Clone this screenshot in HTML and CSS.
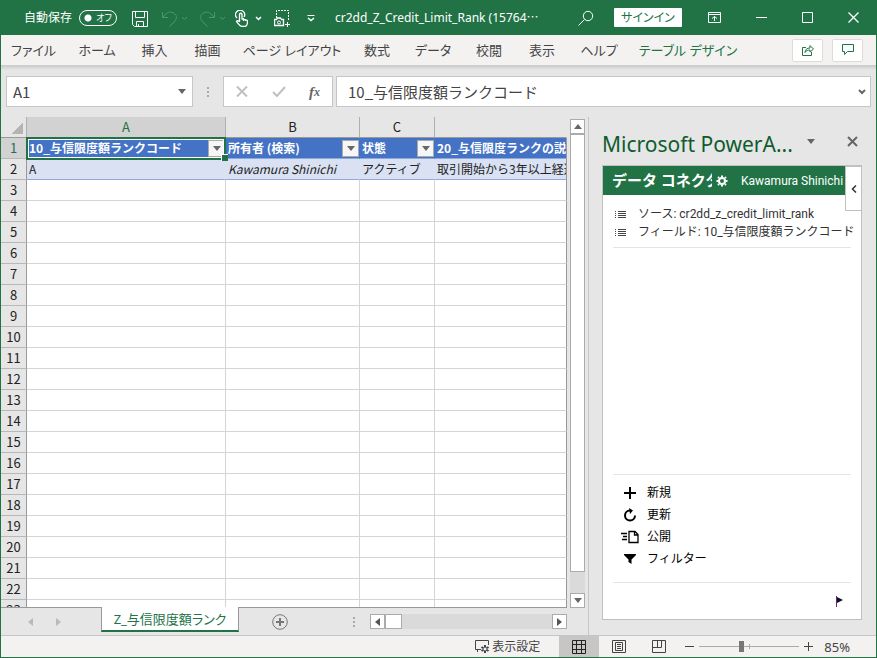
FILE: index.html
```
<!DOCTYPE html>
<html lang="ja">
<head>
    <meta charset="UTF-8">
    <meta name="viewport" content="width=device-width, initial-scale=1.0">
    <title>cr2dd_Z_Credit_Limit_Rank</title>
    <link rel="stylesheet" href="styles.css">
</head>
<body>
    <header class="titlebar">
        <label class="autosave" for="autosave">自動保存</label>
        <span class="toggle">
            <input type="checkbox" id="autosave">
            <span class="toggle-text">オフ</span>
        </span>
        <div class="quick">
            <button type="button" class="icon-btn save" aria-label="保存">
                <svg width="16" height="16" viewBox="0 0 16 16"><path d="M.5.5h15v15h-13l-2-2zM3.500.5v6h9v-6M4.500 15.500v-5h7v5M6.500 15v-2"/></svg>
            </button>
            <button type="button" class="icon-btn dim" aria-label="元に戻す">
                <svg width="15" height="16" viewBox="0 0 15 16"><path d="M.500 1v5.500h5.500M1 6l3-3c3-3 7-2 9 0s2 5-1 8l-4.500 4.500"/></svg>
            </button>
            <button type="button" class="icon-btn dim chev" aria-label="元に戻す履歴">
                <svg width="7" height="5" viewBox="0 0 7 5"><path d="M1 1l2.500 2.500L6 1"/></svg>
            </button>
            <button type="button" class="icon-btn dim redo" aria-label="やり直し">
                <svg width="15" height="16" viewBox="0 0 15 16"><path d="M14.500 1v5.500H9M14 6l-3-3C8 0 4 1 2 3s-2 5 1 8l4.500 4.500"/></svg>
            </button>
            <button type="button" class="icon-btn dim chev" aria-label="やり直し履歴">
                <svg width="7" height="5" viewBox="0 0 7 5"><path d="M1 1l2.500 2.500L6 1"/></svg>
            </button>
            <button type="button" class="icon-btn touch" aria-label="タッチ">
                <svg width="13" height="17" viewBox="0 0 13 17"><path stroke-width="1.300" d="M2 8a4.500 4.500 0 1 1 7-1M4.500 12V4.500a1.200 1.200 0 0 1 2.500 0V9l4 .8c1 .2 1.500.7 1.500 1.700 0 2-.5 5-3 5H7c-2 0-3-2-5.500-5 .500-1.500 2-1 3 .500M8.500 8v3M10.500 9v2"/></svg>
            </button>
            <button type="button" class="icon-btn bright chev" aria-label="タッチ モード">
                <svg width="7" height="5" viewBox="0 0 7 5"><path stroke-width="1.500" d="M1 1l2.500 2.500L6 1"/></svg>
            </button>
            <button type="button" class="icon-btn camera" aria-label="カメラ">
                <svg width="17" height="17" viewBox="0 0 17 17"><path stroke-dasharray="2 1" d="M2.500 8V.5h12v10"/><path stroke-width="1.300" d="M.500 9.500h2l1-1.500h3l1 1.500h2v6h-9z"/><circle cx="5" cy="12.500" r="1.500"/><path d="M11 14.500h5M13.500 12v5"/></svg>
            </button>
            <button type="button" class="icon-btn more" aria-label="クイック アクセスのカスタマイズ">
                <svg width="8" height="7" viewBox="0 0 8 7"><path d="M.5.500h7"/><path stroke-width="1.500" d="M1 3l3 2.500L7 3"/></svg>
            </button>
        </div>
        <span class="doc-title">cr2dd_Z_Credit_Limit_Rank (15764⋯</span>
        <button type="button" class="icon-btn" aria-label="検索">
            <svg width="16" height="16" viewBox="0 0 16 16"><circle cx="10" cy="6" r="4.700"/><path d="M6.500 9.500L.5 15.500"/></svg>
        </button>
        <button type="button" class="signin">サインイン</button>
        <div class="window-btns">
            <button type="button" class="icon-btn" aria-label="リボンの表示オプション">
                <svg width="13" height="11" viewBox="0 0 13 11"><path d="M.5.500h12v10H.500zM.500 2.500h12M6.500 9V4.500M4 6.500l2.500-2 2.500 2"/></svg>
            </button>
            <button type="button" class="icon-btn" aria-label="最小化">
                <svg width="11" height="11" viewBox="0 0 11 11"><path d="M0 5.500h11"/></svg>
            </button>
            <button type="button" class="icon-btn" aria-label="最大化">
                <svg width="11" height="11" viewBox="0 0 11 11"><path d="M.5.500h10v10H.500z"/></svg>
            </button>
            <button type="button" class="icon-btn" aria-label="閉じる">
                <svg width="11" height="11" viewBox="0 0 11 11"><path stroke-width="1.300" d="M.5.500l10 10M10.500.500l-10 10"/></svg>
            </button>
        </div>
    </header>

    <nav class="ribbon">
        <div class="ribbon-tabs">
            <button type="button">ファイル</button>
            <button type="button">ホーム</button>
            <button type="button">挿入</button>
            <button type="button">描画</button>
            <button type="button">ページ レイアウト</button>
            <button type="button">数式</button>
            <button type="button">データ</button>
            <button type="button">校閲</button>
            <button type="button">表示</button>
            <button type="button">ヘルプ</button>
            <button type="button" class="context">テーブル デザイン</button>
        </div>
        <div class="ribbon-actions">
            <button type="button" aria-label="共有">
                <svg width="12" height="12" viewBox="0 0 12 12"><path d="M4 3.500H.500v8h9V8M3 8.500c0-3 2-4.500 5-4.500V1.500l3.500 3.500L8 8V6C6 6 4 6.500 3 8.500z"/></svg>
            </button>
            <button type="button" aria-label="コメント">
                <svg width="12" height="12" viewBox="0 0 12 12"><path d="M.5.500h11v7h-6l-3 3v-3h-2z"/></svg>
            </button>
        </div>
    </nav>

    <div class="formula-row">
        <div class="name-box">
            <input type="text" value="A1" aria-label="名前ボックス">
            <button type="button" aria-label="名前の一覧"><i class="tri down"></i></button>
        </div>
        <span class="dots"></span>
        <div class="fx-box">
            <button type="button" aria-label="キャンセル">
                <svg width="12" height="11" viewBox="0 0 12 11"><path stroke="#c0c0c0" stroke-width="2" d="M1 .500l10 10M11 .500L1 10.500"/></svg>
            </button>
            <button type="button" aria-label="入力">
                <svg width="14" height="11" viewBox="0 0 14 11"><path stroke="#c0c0c0" stroke-width="2" d="M1 6l4 4 8-9"/></svg>
            </button>
            <button type="button" class="fx" aria-label="関数の挿入">f<small>x</small></button>
        </div>
        <div class="formula-box">
            <input type="text" value="10_与信限度額ランクコード" aria-label="数式バー">
            <button type="button" aria-label="数式バーの展開">
                <svg width="8" height="6" viewBox="0 0 8 6"><path stroke="#666" stroke-width="2" d="M1 1l3 3 3-3"/></svg>
            </button>
        </div>
    </div>

    <main class="work">
        <section class="book">
            <div class="sheet-area">
                <div class="sheet">
                    <table>
                        <colgroup>
                            <col class="col-num"><col class="col-a"><col class="col-b"><col class="col-c"><col>
                        </colgroup>
                        <thead>
                            <tr><th class="corner"></th><th class="on">A</th><th>B</th><th>C</th><th></th></tr>
                        </thead>
                        <tbody>
                            <tr class="fields">
                                <th class="on">1</th>
                                <td class="selected"><div>10_与信限度額ランクコード<button type="button" aria-label="フィルター"><i class="tri down"></i></button></div></td>
                                <td><div>所有者 (検索)<button type="button" aria-label="フィルター"><i class="tri down"></i></button></div></td>
                                <td><div>状態<button type="button" aria-label="フィルター"><i class="tri down"></i></button></div></td>
                                <td><div>20_与信限度ランクの説明</div></td>
                            </tr>
                            <tr class="record">
                                <th>2</th>
                                <td><div>A</div></td>
                                <td><div><em>Kawamura Shinichi</em></div></td>
                                <td><div>アクティブ</div></td>
                                <td><div>取引開始から3年以上経過</div></td>
                            </tr>
                            <tr><th>3</th><td></td><td></td><td></td><td></td></tr>
                            <tr><th>4</th><td></td><td></td><td></td><td></td></tr>
                            <tr><th>5</th><td></td><td></td><td></td><td></td></tr>
                            <tr><th>6</th><td></td><td></td><td></td><td></td></tr>
                            <tr><th>7</th><td></td><td></td><td></td><td></td></tr>
                            <tr><th>8</th><td></td><td></td><td></td><td></td></tr>
                            <tr><th>9</th><td></td><td></td><td></td><td></td></tr>
                            <tr><th>10</th><td></td><td></td><td></td><td></td></tr>
                            <tr><th>11</th><td></td><td></td><td></td><td></td></tr>
                            <tr><th>12</th><td></td><td></td><td></td><td></td></tr>
                            <tr><th>13</th><td></td><td></td><td></td><td></td></tr>
                            <tr><th>14</th><td></td><td></td><td></td><td></td></tr>
                            <tr><th>15</th><td></td><td></td><td></td><td></td></tr>
                            <tr><th>16</th><td></td><td></td><td></td><td></td></tr>
                            <tr><th>17</th><td></td><td></td><td></td><td></td></tr>
                            <tr><th>18</th><td></td><td></td><td></td><td></td></tr>
                            <tr><th>19</th><td></td><td></td><td></td><td></td></tr>
                            <tr><th>20</th><td></td><td></td><td></td><td></td></tr>
                            <tr><th>21</th><td></td><td></td><td></td><td></td></tr>
                            <tr><th>22</th><td></td><td></td><td></td><td></td></tr>
                            <tr><th>23</th><td></td><td></td><td></td><td></td></tr>
                        </tbody>
                    </table>
                </div>
                <div class="vscroll">
                    <button type="button" aria-label="上へ"><i class="tri up"></i></button>
                    <div class="vthumb"></div>
                    <button type="button" aria-label="下へ"><i class="tri down"></i></button>
                </div>
            </div>
            <div class="tabs-row">
                <div class="sheet-nav">
                    <button type="button" aria-label="前のシート"><i class="tri left"></i></button>
                    <button type="button" aria-label="次のシート"><i class="tri right"></i></button>
                </div>
                <button type="button" class="sheet-tab">Z_与信限度額ランク</button>
                <div class="tabs-rest">
                    <button type="button" class="add-sheet" aria-label="新しいシート">
                        <svg width="16" height="16" viewBox="0 0 16 16"><circle cx="8" cy="8" r="7.300" stroke="#777"/><path stroke="#777" stroke-width="2" d="M8 4v8M4 8h8"/></svg>
                    </button>
                    <span class="dots"></span>
                    <div class="hscroll">
                        <button type="button" aria-label="左へ"><i class="tri left"></i></button>
                        <div class="hthumb"></div>
                        <button type="button" aria-label="右へ"><i class="tri right"></i></button>
                    </div>
                </div>
            </div>
        </section>

        <aside class="pane">
            <div class="pane-head">
                <h1>Microsoft PowerA...</h1>
                <button type="button" aria-label="作業ウィンドウ オプション"><i class="tri down"></i></button>
                <button type="button" class="pane-close" aria-label="閉じる">
                    <svg width="11" height="11" viewBox="0 0 11 11"><path stroke="#666" stroke-width="2" d="M1 1l9 9M10 1l-9 9"/></svg>
                </button>
            </div>
            <div class="connector">
                <div class="connector-head">
                    <h2>データ コネクタ</h2>
                    <button type="button" aria-label="設定">
                        <svg width="12" height="12" viewBox="0 0 12 12"><circle cx="6" cy="6" r="3" stroke="#fff" stroke-width="2"/><path stroke="#fff" stroke-width="2" d="M6 .500v2M6 9.500v2M.500 6h2M9.500 6h2M2 2l1 1M9 9l1 1M10 2L9 3M3 9l-1 1"/></svg>
                    </button>
                    <span>Kawamura Shinichi</span>
                </div>
                <button type="button" class="collapse" aria-label="折りたたむ">
                    <svg width="6" height="8" viewBox="0 0 6 8"><path stroke="#333" stroke-width="1.500" d="M5 .500L1.500 4 5 7.500"/></svg>
                </button>
                <ul class="sources">
                    <li>
                        <svg width="11" height="9" viewBox="0 0 11 9"><path stroke="#444" d="M3 1.500h8M3 3.500h8M3 5.500h8M3 7.500h8M0 1.500h1M0 3.500h1M0 5.500h1M0 7.500h1"/></svg>
                        ソース: cr2dd_z_credit_limit_rank
                    </li>
                    <li>
                        <svg width="11" height="9" viewBox="0 0 11 9"><path stroke="#444" d="M3 1.500h8M3 3.500h8M3 5.500h8M3 7.500h8M0 1.500h1M0 3.500h1M0 5.500h1M0 7.500h1"/></svg>
                        フィールド: 10_与信限度額ランクコード
                    </li>
                </ul>
                <div class="actions">
                    <button type="button">
                        <svg width="18" height="14" viewBox="0 0 18 14"><path stroke="#000" stroke-width="2" d="M9 1v12M3 7h12"/></svg>
                        新規
                    </button>
                    <button type="button">
                        <svg width="18" height="14" viewBox="0 0 18 14"><path stroke="#000" stroke-width="2" d="M9 2.500a5 5 0 1 0 5 5"/><path fill="#000" d="M8 0l4 2.500L9 6z"/></svg>
                        更新
                    </button>
                    <button type="button">
                        <svg width="18" height="14" viewBox="0 0 18 14"><path stroke="#000" stroke-width="1.300" d="M0 3.500h6M2 6.500h4M1 9.500h5M8 1.500h6l3 3v8H8zM13.500 1.500v3.500H17"/></svg>
                        公開
                    </button>
                    <button type="button">
                        <svg width="18" height="14" viewBox="0 0 18 14"><path fill="#000" d="M3 2h12v1l-4.500 4.500V12L7.500 10V7.500L3 3z"/></svg>
                        フィルター
                    </button>
                </div>
                <div class="connector-foot">
                    <button type="button" aria-label="フラグ">
                        <svg width="8" height="11" viewBox="0 0 8 11"><path stroke="#702070" d="M.500 0v11"/><path fill="#001828" d="M1 1l6 3-6 3z"/></svg>
                    </button>
                </div>
            </div>
        </aside>
    </main>

    <footer class="status">
        <button type="button" class="display">
            <svg width="15" height="13" viewBox="0 0 15 13"><path stroke="#444" d="M6 9.500H.500V.500h13V5M2.500 12v-2"/><circle cx="10" cy="9" r="2" stroke="#444"/><path stroke="#444" stroke-width="2" d="M10 5v2M10 11v2M6.500 7l1.500 1M12 10l1.500 1M13.500 7L12 8M8 10l-1.500 1"/></svg>
            表示設定
        </button>
        <button type="button" class="view on" aria-label="標準">
            <svg width="14" height="14" viewBox="0 0 14 14"><path stroke="#222" d="M.5.500h13v13H.500zM.500 4.500h13M.500 9.500h13M4.500.500v13M9.500.500v13"/></svg>
        </button>
        <button type="button" class="view" aria-label="ページ レイアウト">
            <svg width="14" height="13" viewBox="0 0 14 13"><path stroke="#444" d="M.5.500h13v12H.500zM3.500 2.500h7v8h-7zM5 4.500h4M5 6.500h4M5 8.500h4"/></svg>
        </button>
        <button type="button" class="view" aria-label="改ページ プレビュー">
            <svg width="14" height="13" viewBox="0 0 14 13"><path stroke="#444" d="M.5.500h13v12H.500zM.500 7.500h9V.500M5.500.500v7"/></svg>
        </button>
        <div class="zoom">
            <button type="button" aria-label="縮小"><svg width="9" height="9" viewBox="0 0 9 9"><path stroke="#444" d="M0 4.500h9"/></svg></button>
            <input type="range" min="10" max="190" value="86" aria-label="ズーム">
            <button type="button" aria-label="拡大"><svg width="9" height="9" viewBox="0 0 9 9"><path stroke="#444" d="M0 4.500h9M4.500 0v9"/></svg></button>
            <span>85%</span>
        </div>
    </footer>
</body>
</html>
```

FILE: styles.css
```
* {
    box-sizing: border-box;
}

body {
    margin: 0;
    height: 100vh;
    display: flex;
    flex-direction: column;
    overflow: hidden;
    background-color: #e6e6e6;
    border: 1px solid #217346;
    border-top: none;
    color: #444;
    font-family: "Noto Sans", "Noto Sans CJK JP", sans-serif;
    font-size: 12px;
    line-height: 16px;
}

button {
    margin: 0;
    padding: 0;
    border: none;
    background: none;
    color: inherit;
    font: inherit;
    display: flex;
    align-items: center;
    justify-content: center;
    flex-shrink: 0;
    white-space: nowrap;
}

input {
    margin: 0;
    font: inherit;
    color: inherit;
}

svg {
    display: block;
    fill: none;
    flex-shrink: 0;
}

/* triangles */
.tri {
    width: 0;
    height: 0;
    border: 4px solid transparent;
}

.tri.down {
    border-top: 5px solid #666;
    border-bottom: none;
}

.tri.up {
    border-bottom: 5px solid #666;
    border-top: none;
}

.tri.left {
    border-right: 5px solid #555;
    border-left: none;
}

.tri.right {
    border-left: 5px solid #555;
    border-right: none;
}

.dots {
    width: 2px;
    height: 10px;
    background: repeating-linear-gradient(#aaa 0 2px, transparent 2px 4px);
}

/* title bar */
.titlebar {
    height: 35px;
    flex-shrink: 0;
    display: flex;
    align-items: center;
    padding-left: 23px;
    background-color: #217346;
    color: #fff;
}

.autosave {
    margin-right: 7px;
}

.toggle {
    position: relative;
    width: 38px;
    height: 16px;
    flex-shrink: 0;
}

.toggle input {
    appearance: none;
    display: block;
    width: 38px;
    height: 16px;
    border: 1px solid #fff;
    border-radius: 8px;
    background: radial-gradient(circle at 8px 7px, #fff 3px, transparent 4px);
}

.toggle-text {
    position: absolute;
    right: 5px;
    top: 0;
    font-size: 9px;
    font-feature-settings: "palt";
    pointer-events: none;
}

.quick {
    display: flex;
    align-items: center;
    margin: 2px 20px 0 15px;
}

.icon-btn svg {
    stroke: #fff;
}

.icon-btn.dim svg {
    stroke: #4f9470;
}

.save {
    margin-right: 14px;
}

.chev {
    margin-left: 4px;
}

.redo {
    margin-left: 12px;
}

.touch {
    margin-left: 9px;
}

.bright {
    margin-left: 7px;
}

.camera {
    margin-left: 12px;
}

.more {
    margin-left: 16px;
}

.doc-title {
    flex: 1;
    min-width: 0;
    overflow: hidden;
    white-space: nowrap;
}

.signin {
    width: 68px;
    height: 19px;
    margin: 0 26px 0 20px;
    background-color: #fff;
    border-radius: 1px;
    color: #217346;
    font-feature-settings: "palt";
}

.window-btns {
    display: flex;
    gap: 35px;
    padding-right: 17px;
}

/* ribbon */
.ribbon {
    height: 30px;
    flex-shrink: 0;
    display: flex;
    align-items: center;
    justify-content: space-between;
    padding-right: 13px;
    background-color: #f3f2f1;
    font-size: 13px;
    font-feature-settings: "palt";
}

.ribbon-tabs {
    display: grid;
    grid-template-columns: 65px 62px 53px 53px 116px 54px 58px 54px 52px 62px 116px;
}

.ribbon-tabs .context {
    color: #217346;
}

.ribbon-actions {
    display: flex;
    gap: 9px;
}

.ribbon-actions button {
    width: 31px;
    height: 23px;
    background-color: #fff;
    border: 1px solid #dcdcdc;
    border-radius: 2px;
}

.ribbon-actions svg {
    stroke: #217346;
}

/* formula bar */
.formula-row {
    flex-shrink: 0;
    display: flex;
    align-items: center;
    padding: 11px 5px 10px;
    background: linear-gradient(#c8c8c8, #e6e6e6 5px);
    font-size: 15px;
}

.name-box,
.fx-box,
.formula-box {
    height: 31px;
    display: flex;
    align-items: center;
    background-color: #fff;
    border: 1px solid #c6c6c6;
}

.name-box {
    width: 187px;
    padding: 0 6px;
}

.formula-row input {
    flex: 1;
    min-width: 0;
    border: none;
    background: none;
    padding: 0;
    font-family: "Noto Sans CJK JP", sans-serif;
}

.formula-row .dots {
    margin: 0 14px;
}

.fx-box {
    width: 110px;
    justify-content: space-between;
    padding: 0 12px;
}

.fx {
    color: #666;
    font-family: "Liberation Serif", serif;
    font-style: italic;
    font-weight: bold;
}

.fx small {
    font-size: 12px;
}

.formula-box {
    flex: 1;
    margin-left: 3px;
    padding: 0 4px 0 11px;
}

/* work area */
.work {
    flex: 1;
    min-height: 0;
    display: flex;
}

.book {
    flex: 1;
    min-width: 0;
    display: flex;
    flex-direction: column;
}

.sheet-area {
    flex: 1;
    min-height: 0;
    display: flex;
    gap: 3px;
    padding-right: 3px;
}

.sheet {
    flex: 1;
    min-width: 0;
    overflow: hidden;
    border-bottom: 1px solid #999;
    font-family: "Noto Sans CJK JP", sans-serif;
}

table {
    width: 100%;
    table-layout: fixed;
    border-collapse: separate;
    border-spacing: 0;
}

.col-num {
    width: 26px;
}

.col-a {
    width: 199px;
}

.col-b {
    width: 134px;
}

.col-c {
    width: 75px;
}

tr {
    height: 21px;
}

th,
td {
    height: 21px;
    padding: 0;
    border-right: 1px solid #d4d4d4;
    border-bottom: 1px solid #d4d4d4;
    line-height: 20px;
}

td {
    background-color: #fff;
}

td:last-child {
    border-right-color: #999;
}

th {
    background-color: #e6e6e6;
    border-bottom-color: #b8b8b8;
    border-right-color: #999;
    color: #222;
    font-size: 13px;
    font-weight: normal;
}

thead th {
    border-bottom-color: #999;
    border-right-color: #b0b0b0;
}

thead th:last-child {
    border-right-color: transparent;
}

.corner {
    background: linear-gradient(135deg, transparent 50%, #b4b4b4 50%) 10px 5px / 12px 12px no-repeat, #e6e6e6;
}

th.on {
    background-color: #d2d2d2;
    color: #217346;
}

td div {
    height: 20px;
    display: flex;
    align-items: center;
    justify-content: space-between;
    padding-left: 2px;
    overflow: hidden;
    white-space: nowrap;
    color: #222;
}

.fields td {
    background-color: #4472c4;
    border-right-color: #4472c4;
    border-bottom-color: #8ea9db;
}

.fields div {
    color: #fff;
    font-weight: bold;
}

.fields td button {
    width: 17px;
    height: 17px;
    background-color: #f6f6f6;
    border: 1px solid #aaa;
}

.record td {
    background-color: #d9e1f2;
    border-right-color: #d9e1f2;
    border-bottom-color: #8ea9db;
}

.fields td:last-child,
.record td:last-child {
    border-right-color: #999;
}

.selected {
    position: relative;
}

.selected::before {
    content: "";
    position: absolute;
    inset: -1px -1px -2px -1px;
    border: 2px solid #217346;
    box-shadow: inset 0 0 0 1px #fff;
    pointer-events: none;
}

.selected::after {
    content: "";
    position: absolute;
    right: -3px;
    bottom: -3px;
    width: 6px;
    height: 6px;
    background-color: #217346;
    border-top: 1px solid #fff;
    border-left: 1px solid #fff;
}

.vscroll {
    width: 15px;
    display: flex;
    flex-direction: column;
    padding-top: 2px;
    background: linear-gradient(#e6e6e6 2px, #dadada 2px);
}

.vscroll button,
.hscroll button {
    width: 15px;
    height: 15px;
    background-color: #fff;
    border: 1px solid #ababab;
}

.vthumb {
    flex: 1;
    margin-bottom: 21px;
    background-color: #fff;
    border: 1px solid #ababab;
}

/* sheet tabs */
.tabs-row {
    height: 27px;
    flex-shrink: 0;
    display: flex;
    padding-right: 21px;
}

.sheet-nav {
    width: 100px;
    display: flex;
    justify-content: center;
    align-items: center;
    gap: 23px;
    padding-right: 14px;
    opacity: 0.3;
}

.sheet-tab {
    height: 25px;
    width: 138px;
    margin-top: -1px;
    background-color: #fff;
    border: 1px solid #999;
    border-top: none;
    border-bottom: 2px solid #217346;
    color: #217346;
    font-size: 13px;
    font-feature-settings: "palt";
    position: relative;
}

.tabs-rest {
    flex: 1;
    display: flex;
    align-items: center;
}

.add-sheet {
    margin-left: 33px;
    margin-right: auto;
}

.hscroll {
    width: 197px;
    display: flex;
    margin-left: 15px;
    background-color: #dadada;
}

.hthumb {
    width: 17px;
    margin-right: auto;
    background-color: #fff;
    border: 1px solid #ababab;
}

/* task pane */
.pane {
    width: 288px;
    flex-shrink: 0;
    display: flex;
    flex-direction: column;
    padding: 0 14px 15px 13px;
    border-left: 1px solid #c6c6c6;
}

.pane-head {
    height: 48px;
    display: flex;
    align-items: center;
    padding-right: 4px;
}

.pane-head h1 {
    flex: 1;
    margin: 0;
    padding-top: 6px;
    color: #0f5c2e;
    font-size: 21px;
    font-weight: normal;
    line-height: 30px;
    white-space: nowrap;
}

.pane-close {
    margin-left: 32px;
}

.connector {
    position: relative;
    flex: 1;
    display: flex;
    flex-direction: column;
    background-color: #fff;
    border: 1px solid #c0c0c0;
    padding: 0 10px;
    color: #333;
    font-family: Roboto, "Noto Sans CJK JP", sans-serif;
}

.connector-head {
    height: 29px;
    display: flex;
    align-items: center;
    margin: 0 6px 0 -10px;
    padding-left: 9px;
    background-color: #217346;
    color: #fff;
    white-space: nowrap;
}

.connector-head h2 {
    width: 100px;
    margin: 0 4px 0 0;
    overflow: hidden;
    font-size: 15px;
    line-height: 20px;
}

.connector-head span {
    margin-left: 13px;
}

.collapse {
    position: absolute;
    top: 0;
    right: -1px;
    width: 17px;
    height: 45px;
    background-color: #fff;
    border: 1px solid #c0c0c0;
}

.sources {
    list-style: none;
    margin: 0;
    padding: 10px 0 6px 2px;
    border-bottom: 1px solid #e4e4e4;
    white-space: nowrap;
}

.sources li {
    height: 18px;
    display: flex;
    align-items: center;
    gap: 12px;
}

.actions {
    display: flex;
    flex-direction: column;
    margin-top: auto;
    padding: 7px 0 12px 8px;
    border-top: 1px solid #e4e4e4;
    border-bottom: 1px solid #e4e4e4;
    color: #000;
}

.actions button {
    height: 22px;
    justify-content: flex-start;
    gap: 8px;
}

.connector-foot {
    height: 36px;
    display: flex;
    align-items: center;
    justify-content: flex-end;
    padding-right: 7px;
}

/* status bar */
.status {
    height: 22px;
    flex-shrink: 0;
    display: flex;
    align-items: center;
    justify-content: flex-end;
    padding-right: 26px;
    background-color: #f3f2f1;
    border-top: 1px solid #c6c6c6;
}

.display {
    gap: 2px;
    margin-right: 19px;
}

.view {
    width: 40px;
    height: 21px;
}

.view.on {
    background-color: #c8c6c4;
}

.zoom {
    display: flex;
    align-items: center;
    gap: 5px;
    margin-left: 6px;
}

.zoom input {
    appearance: none;
    width: 100px;
    height: 11px;
    background: linear-gradient(#aaa, #aaa) center / 100% 1px no-repeat,
        linear-gradient(#aaa, #aaa) center / 1px 5px no-repeat;
}

.zoom input::-webkit-slider-thumb {
    appearance: none;
    width: 5px;
    height: 11px;
    background-color: #777;
}

.zoom span {
    margin-left: 6px;
    font-size: 13px;
}
```
